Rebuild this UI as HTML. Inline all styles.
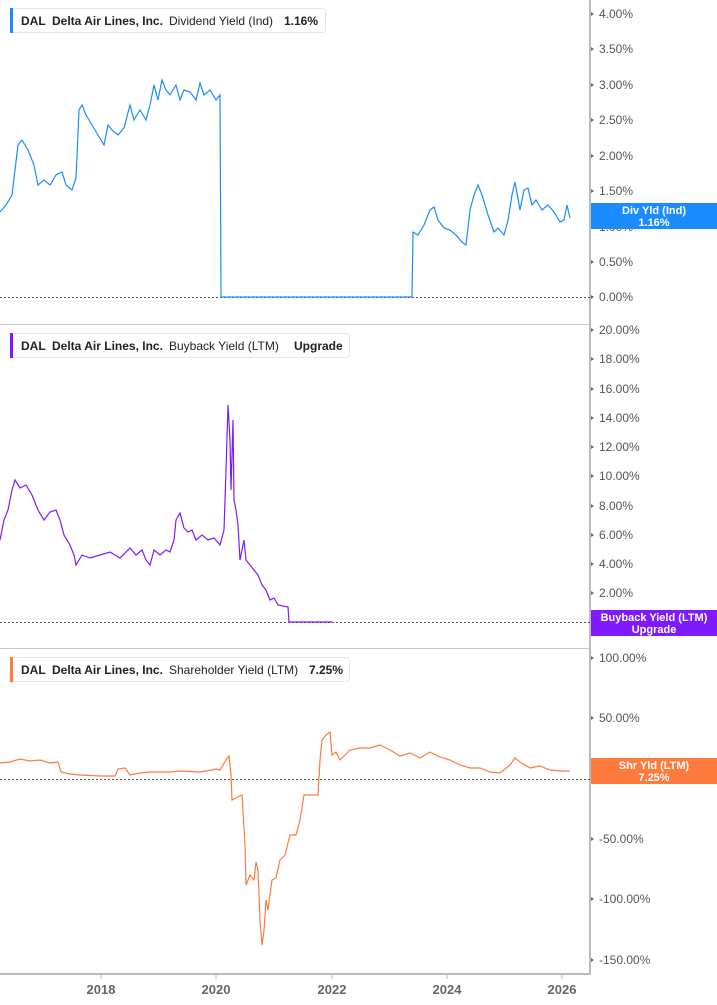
<!DOCTYPE html>
<html><head><meta charset="utf-8"><style>
html,body{margin:0;padding:0;background:#fff;}
svg{display:block;font-family:"Liberation Sans",sans-serif;}
</style></head><body>
<svg width="717" height="1005" viewBox="0 0 717 1005" xmlns="http://www.w3.org/2000/svg">
<rect width="717" height="1005" fill="#fff"/>
<line x1="0" y1="324.5" x2="590" y2="324.5" stroke="#c8c8c8"/>
<line x1="0" y1="648.5" x2="590" y2="648.5" stroke="#c8c8c8"/>
<line x1="0" y1="974" x2="591" y2="974" stroke="#bbb" stroke-width="2"/>
<line x1="590" y1="0" x2="590" y2="975" stroke="#bbb" stroke-width="2"/>
<g stroke="#555" stroke-dasharray="2,2" stroke-width="1">
<line x1="0" y1="297.5" x2="590" y2="297.5"/>
<line x1="0" y1="622.5" x2="590" y2="622.5"/>
<line x1="0" y1="779.5" x2="590" y2="779.5"/>
</g>
<g stroke="#bbb"><line x1="101" y1="974" x2="101" y2="979"/><line x1="216" y1="974" x2="216" y2="979"/><line x1="332" y1="974" x2="332" y2="979"/><line x1="447" y1="974" x2="447" y2="979"/><line x1="562" y1="974" x2="562" y2="979"/></g>
<g fill="#666">
<path d="M591 12l3 2-3 2z M591 47l3 2-3 2z M591 83l3 2-3 2z M591 118l3 2-3 2z M591 154l3 2-3 2z M591 189l3 2-3 2z M591 225l3 2-3 2z M591 260l3 2-3 2z M591 295l3 2-3 2z M591 328l3 2-3 2z M591 357l3 2-3 2z M591 387l3 2-3 2z M591 416l3 2-3 2z M591 445l3 2-3 2z M591 474l3 2-3 2z M591 504l3 2-3 2z M591 533l3 2-3 2z M591 562l3 2-3 2z M591 591l3 2-3 2z M591 656l3 2-3 2z M591 716l3 2-3 2z M591 837l3 2-3 2z M591 897l3 2-3 2z M591 958l3 2-3 2z"/>
</g>
<g font-size="13" font-weight="bold" fill="#666" text-anchor="middle">
<text x="101" y="994">2018</text><text x="216" y="994">2020</text><text x="332" y="994">2022</text><text x="447" y="994">2024</text><text x="562" y="994">2026</text></g>
<g font-size="12" fill="#555">
<text x="599" y="18">4.00%</text><text x="599" y="53">3.50%</text><text x="599" y="89">3.00%</text><text x="599" y="124">2.50%</text><text x="599" y="160">2.00%</text><text x="599" y="195">1.50%</text><text x="599" y="231">1.00%</text><text x="599" y="266">0.50%</text><text x="599" y="301">0.00%</text>
<text x="599" y="334">20.00%</text><text x="599" y="363">18.00%</text><text x="599" y="393">16.00%</text><text x="599" y="422">14.00%</text><text x="599" y="451">12.00%</text><text x="599" y="480">10.00%</text><text x="599" y="510">8.00%</text><text x="599" y="539">6.00%</text><text x="599" y="568">4.00%</text><text x="599" y="597">2.00%</text>
<text x="599" y="662">100.00%</text><text x="599" y="722">50.00%</text><text x="599" y="843">-50.00%</text><text x="599" y="903">-100.00%</text><text x="599" y="964">-150.00%</text>
</g>
<polyline fill="none" stroke="#1a8cff" stroke-width="1.2" points="0,212 6,205 12,195 15,170 18,145 22,140 28,150 34,165 38,185 44,180 50,185 56,175 62,172 66,185 72,190 76,178 79,110 82,105 86,115 92,125 98,135 104,145 108,125 112,130 118,135 124,128 130,105 134,120 140,110 146,120 150,105 154,85 158,100 162,80 166,90 170,95 176,85 180,100 184,90 190,92 196,100 200,83 204,95 210,90 216,100 220,95 221,297 412,297 413,232 418,235 424,225 430,210 434,207 438,220 444,228 450,230 456,235 462,242 466,245 470,210 474,195 478,185 482,195 488,215 494,232 498,228 504,235 508,220 512,195 515,182 520,210 524,190 528,188 532,205 536,200 542,210 548,205 554,212 560,222 564,220 567,205 570,218"/>
<polyline fill="none" stroke="#7f1aff" stroke-width="1.2" points="0,540 4,520 8,510 12,490 15,480 20,488 26,485 32,495 38,510 44,520 50,512 56,510 60,520 64,535 70,545 74,555 76,565 82,555 90,558 100,555 110,552 120,558 130,548 136,555 142,550 146,560 150,565 154,550 160,555 166,550 170,552 174,540 176,520 180,513 184,528 188,532 192,530 196,540 202,535 208,540 214,538 220,545 224,530 226,470 228,405 230,440 231,490 233,420 234,500 236,510 238,525 240,560 244,540 246,560 250,565 254,570 258,575 262,585 266,590 270,600 274,598 278,605 288,607 289,622 332,622"/>
<polyline fill="none" stroke="#ff7a3d" stroke-width="1.2" points="0,763 10,762 20,759 30,761 40,760 50,763 58,762 61,772 70,774 80,775 100,776 115,776 118,769 125,768 130,775 140,773 150,772 170,772 180,771 200,772 212,770 216,769 220,770 226,760 229,756 231,775 232,800 236,798 242,795 245,845 246,885 250,875 254,880 256,862 258,870 260,920 262,945 264,930 266,900 268,910 272,880 276,878 280,860 285,855 290,835 296,835 300,820 304,795 308,795 318,795 320,760 322,740 326,735 330,732 332,755 336,752 340,760 350,750 360,748 370,748 380,745 390,750 400,756 410,753 420,758 430,752 440,757 450,760 460,765 470,768 480,768 490,772 500,773 510,765 515,758 520,762 530,768 540,766 550,770 560,771 570,771"/>
<rect x="591" y="203" width="126" height="26" fill="#1a8cff"/>
<g font-size="11" font-weight="bold" fill="#fff" text-anchor="middle">
<text x="654" y="214">Div Yld (Ind)</text><text x="654" y="226">1.16%</text></g>
<rect x="591" y="610" width="126" height="26" fill="#7f1aff"/>
<g font-size="11" font-weight="bold" fill="#fff" text-anchor="middle">
<text x="654" y="621">Buyback Yield (LTM)</text><text x="654" y="633">Upgrade</text></g>
<rect x="591" y="758" width="126" height="26" fill="#ff7a3d"/>
<g font-size="11" font-weight="bold" fill="#fff" text-anchor="middle">
<text x="654" y="769">Shr Yld (LTM)</text><text x="654" y="781">7.25%</text></g>
<g font-size="12" fill="#222">
<rect x="10.5" y="8.5" width="315" height="24" rx="3" fill="#fff" stroke="#e6e6e6"/>
<rect x="10" y="8" width="3" height="25" fill="#1a8cff"/>
<text x="21" y="25" font-weight="bold">DAL</text><text x="52" y="25" font-weight="bold">Delta Air Lines, Inc.</text><text x="169" y="25">Dividend Yield (Ind)</text><text x="284" y="25" font-weight="bold">1.16%</text>
<rect x="10.5" y="333.5" width="339" height="24" rx="3" fill="#fff" stroke="#e6e6e6"/>
<rect x="10" y="333" width="3" height="25" fill="#7f1aff"/>
<text x="21" y="350" font-weight="bold">DAL</text><text x="52" y="350" font-weight="bold">Delta Air Lines, Inc.</text><text x="169" y="350">Buyback Yield (LTM)</text><text x="294" y="350" font-weight="bold">Upgrade</text>
<rect x="10.5" y="657.5" width="339" height="24" rx="3" fill="#fff" stroke="#e6e6e6"/>
<rect x="10" y="657" width="3" height="25" fill="#ff7a3d"/>
<text x="21" y="674" font-weight="bold">DAL</text><text x="52" y="674" font-weight="bold">Delta Air Lines, Inc.</text><text x="169" y="674">Shareholder Yield (LTM)</text><text x="309" y="674" font-weight="bold">7.25%</text>
</g>
</svg>
</body></html>
